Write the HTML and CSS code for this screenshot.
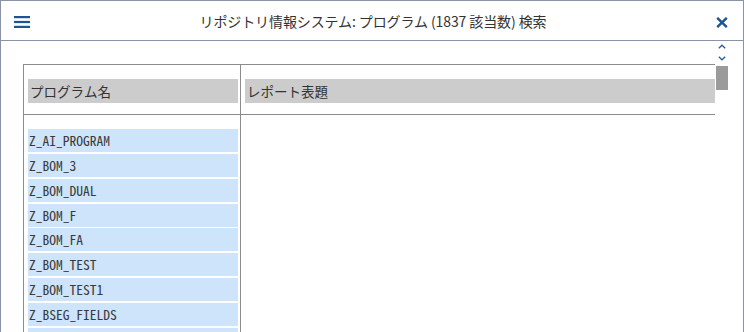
FILE: index.html
```html
<!DOCTYPE html>
<html lang="ja">
<head>
<meta charset="utf-8">
<title>リポジトリ情報システム</title>
<link rel="stylesheet" href="styles.css">
</head>
<body>
<div class="window">
  <header class="titlebar">
    <button class="icon-btn menu" aria-label="メニュー">
      <svg width="16" height="12" viewBox="0 0 16 12"><rect x="0" y="0" width="16" height="2.2" fill="#1d5494"/><rect x="0" y="4.9" width="16" height="2.2" fill="#1d5494"/><rect x="0" y="9.8" width="16" height="2.2" fill="#1d5494"/></svg>
    </button>
    <h1 class="title">リポジトリ情報システム: プログラム (1837 該当数) 検索</h1>
    <button class="icon-btn close" aria-label="閉じる">
      <svg width="12" height="11" viewBox="0 0 12 11"><path d="M1.2 0.8 L10.8 10.2 M10.8 0.8 L1.2 10.2" stroke="#1d5494" stroke-width="2.4" fill="none"/></svg>
    </button>
  </header>
  <main class="content">
    <div class="table">
      <div class="col col-name">
        <div class="head"><div class="head-cell">プログラム名</div></div>
        <div class="rows">
          <div class="row">Z_AI_PROGRAM</div>
          <div class="row">Z_BOM_3</div>
          <div class="row">Z_BOM_DUAL</div>
          <div class="row">Z_BOM_F</div>
          <div class="row">Z_BOM_FA</div>
          <div class="row">Z_BOM_TEST</div>
          <div class="row">Z_BOM_TEST1</div>
          <div class="row">Z_BSEG_FIELDS</div>
          <div class="row"></div>
        </div>
      </div>
      <div class="col col-title">
        <div class="head"><div class="head-cell">レポート表題</div></div>
        <div class="rows"></div>
      </div>
    </div>
    <div class="scroller">
      <svg class="arrow" width="8" height="5" viewBox="0 0 8 5"><path d="M0.8 4.2 L4 1.2 L7.2 4.2" stroke="#2a5d9c" stroke-width="1.3" fill="none"/></svg>
      <svg class="arrow" width="8" height="5" viewBox="0 0 8 5"><path d="M0.8 0.8 L4 3.8 L7.2 0.8" stroke="#2a5d9c" stroke-width="1.3" fill="none"/></svg>
      <div class="thumb"></div>
    </div>
  </main>
</div>
</body>
</html>
```
FILE: styles.css
```css
* { box-sizing: border-box; }
html, body { margin: 0; padding: 0; background: #fff; }
body { font-family: "Noto Sans CJK JP", sans-serif; color: #333; }
.window {
  width: 744px;
  height: 332px;
  border: 1px solid #8d93a6;
  border-bottom: none;
  overflow: hidden;
  background: #fff;
}
.titlebar {
  height: 40px;
  border-bottom: 1px solid #8d93a6;
  display: flex;
  align-items: center;
  padding: 0 0 0 13px;
}
.icon-btn {
  border: none;
  background: none;
  padding: 0;
  display: flex;
  align-items: center;
  justify-content: center;
}
.menu { width: 16px; height: 12px; margin-top: 2px; }
.title {
  flex: 1;
  margin: 0;
  text-align: center;
  font-size: 14px;
  font-weight: normal;
  color: #333;
  letter-spacing: -0.1px;
}
.close { width: 12px; height: 11px; margin: 3px 15px 0 0; }
.content {
  display: flex;
  padding-left: 22px;
}
.table {
  width: 692px;
  margin-top: 23px;
  border-top: 1px solid #8c8c8c;
  border-left: 1px solid #8c8c8c;
  display: flex;
  height: 300px;
}
.col { display: flex; flex-direction: column; }
.col-name { width: 217px; border-right: 1px solid #8c8c8c; padding: 0 2px 0 4px; }
.col-title { flex: 1; padding-left: 4px; }
.head {
  height: 50px;
  padding-top: 14px;
  border-bottom: 1px solid #8c8c8c;
}
.col-name .head { margin: 0 -2px 0 -4px; padding-left: 4px; padding-right: 2px; }
.col-title .head { margin-left: -4px; padding-left: 4px; }
.head-cell {
  height: 24px;
  background: #cccccc;
  padding-left: 2px;
  font-family: "Noto Sans Mono CJK JP", "Noto Sans CJK JP", monospace;
  font-size: 13.5px;
  line-height: 24px;
  color: #333;
}
.rows {
  padding-top: 14px;
  display: flex;
  flex-direction: column;
  gap: 1.86px;
}
.row {
  height: 23px;
  background: #cde4fa;
  padding-left: 1px;
  font-family: "Noto Sans Mono CJK JP", "Liberation Mono", monospace;
  font-size: 13.5px;
  line-height: 23px;
  color: #3a3a3a;
}
.scroller {
  width: 13px;
  display: flex;
  flex-direction: column;
  align-items: center;
  padding-top: 3px;
}
.arrow { display: block; }
.arrow + .arrow { margin-top: 7px; }
.thumb {
  margin-top: 5px;
  width: 12px;
  height: 24px;
  background: #9b9b9b;
}
```
